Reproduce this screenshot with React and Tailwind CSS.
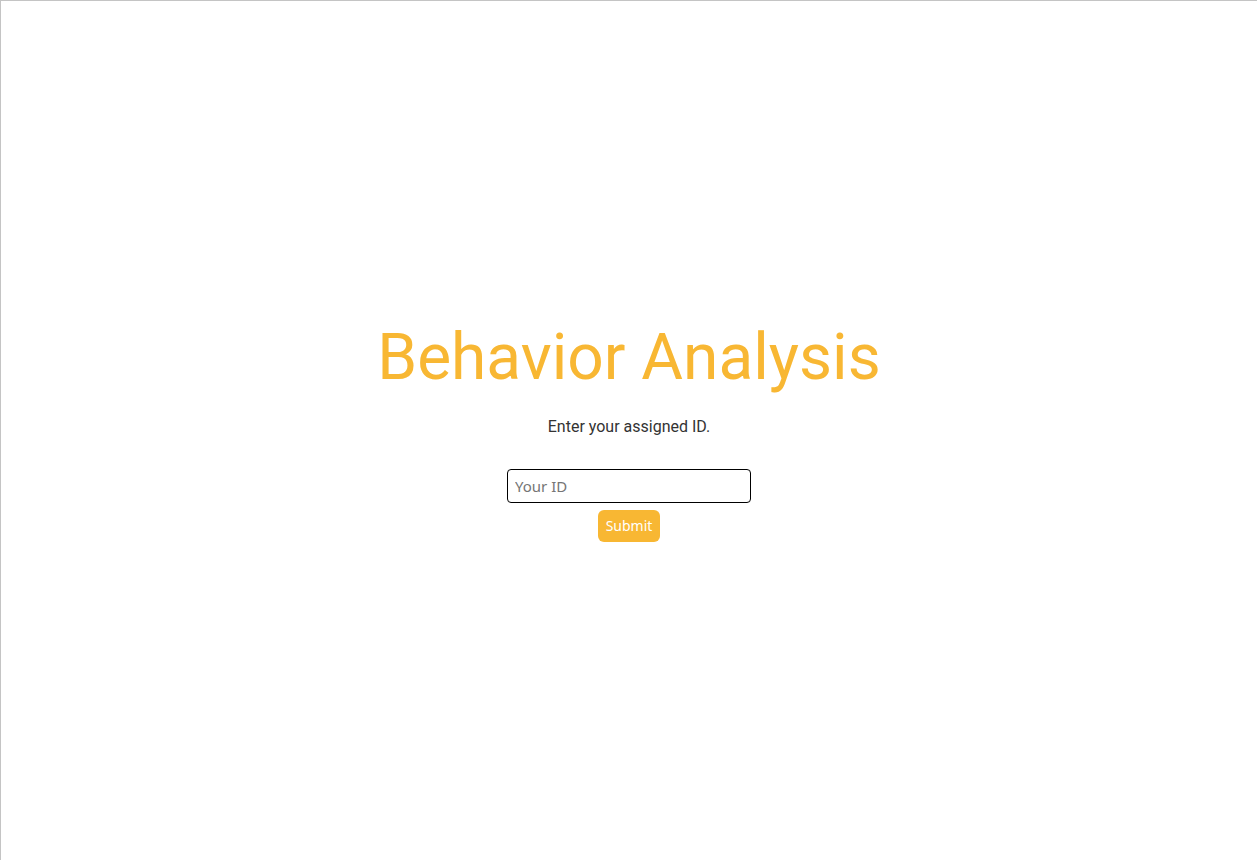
import React, { useState } from "react";

export default function App() {
  const [id, setId] = useState("");

  return (
    <div className="min-h-screen bg-white border-l border-t border-[#c4c4c4] flex items-center justify-center font-['Roboto',sans-serif]">
      <div className="flex flex-col items-center">
        <h1 className="text-[64px] leading-[76px] text-[#f8b733] font-normal">Behavior Analysis</h1>
        <p className="mt-[19px] text-[16px] text-[#333333]">Enter your assigned ID.</p>
        <form
          className="mt-[30px] flex flex-col items-center"
          onSubmit={(e) => e.preventDefault()}
        >
          <input
            value={id}
            onChange={(e) => setId(e.target.value)}
            placeholder="Your ID"
            className="w-[244px] h-[34px] px-[7px] border border-black rounded-[4px] text-[15px] font-['Noto_Sans',sans-serif] placeholder:text-[#757575] outline-none"
          />
          <button
            type="submit"
            className="mt-[7px] w-[62px] h-[32px] rounded-[6px] bg-[#f8b733] text-white text-[14px] font-['Noto_Sans',sans-serif]"
          >
            Submit
          </button>
        </form>
      </div>
    </div>
  );
}
